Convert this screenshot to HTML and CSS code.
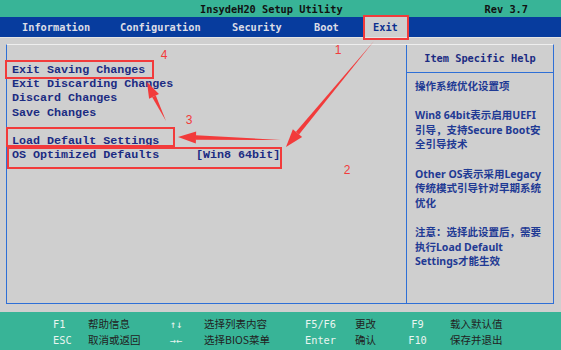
FILE: index.html
```html
<!DOCTYPE html>
<html lang="zh">
<head>
    <meta charset="UTF-8">
    <meta name="viewport" content="width=device-width, initial-scale=1.0">
    <title>InsydeH20 Setup Utility</title>
    <link rel="stylesheet" href="styles.css">
</head>
<body>
    <div class="screen">
        <div class="title-bar">
            <span class="title">InsydeH20 Setup Utility</span>
            <span class="rev">Rev 3.7</span>
        </div>

        <div class="menu-bar">
            <span class="menu-item">Information</span>
            <span class="menu-item">Configuration</span>
            <span class="menu-item">Security</span>
            <span class="menu-item">Boot</span>
            <span class="menu-item active">Exit</span>
        </div>

        <div class="body">
            <div class="frame">
                <!-- Exit options -->
                <div class="options">
                    <div class="option">Exit Saving Changes</div>
                    <div class="option">Exit Discarding Changes</div>
                    <div class="option">Discard Changes</div>
                    <div class="option">Save Changes</div>
                    <div class="option gap">Load Default Settings</div>
                    <div class="option"><span class="label">OS Optimized Defaults</span><span class="value">[Win8 64bit]</span></div>
                </div>

                <!-- Help panel -->
                <div class="help">
                    <div class="help-title">Item Specific Help</div>
                    <div class="help-text">
                        <p>操作系统优化设置项</p>
                        <p>Win8 64bit表示启用UEFI<br>引导，支持Secure Boot安<br>全引导技术</p>
                        <p>Other OS表示采用Legacy<br>传统模式引导针对早期系统<br>优化</p>
                        <p>注意：选择此设置后，需要<br>执行Load Default<br>Settings才能生效</p>
                    </div>
                </div>
            </div>
        </div>

        <div class="key-bar">
            <span class="key">F1</span>
            <span class="desc">帮助信息</span>
            <span class="sym">↑↓</span>
            <span class="desc">选择列表内容</span>
            <span class="key">F5/F6</span>
            <span class="desc">更改</span>
            <span class="key fkey">F9</span>
            <span class="desc">载入默认值</span>

            <span class="key">ESC</span>
            <span class="desc">取消或返回</span>
            <span class="sym">→←</span>
            <span class="desc">选择BIOS菜单</span>
            <span class="key">Enter</span>
            <span class="desc">确认</span>
            <span class="key fkey">F10</span>
            <span class="desc">保存并退出</span>
        </div>

        <!-- red annotations drawn over the screenshot -->
        <svg class="marks" width="561" height="350" viewBox="0 0 561 350">
            <g fill="none" stroke="#f23b3b" stroke-width="2">
                <rect x="364" y="16" width="44" height="23"/>
                <rect x="6" y="61" width="147" height="17"/>
                <rect x="7" y="128" width="167" height="18"/>
                <rect x="8" y="148" width="273" height="20"/>
            </g>
            <g fill="#f23b3b">
                <polygon points="374,41 295.96,131.87 299.04,134.43"/>
                <polygon points="286,147 292.88,129.32 302.12,136.98"/>
                <polygon points="281,140 196.05,135.32 195.93,139.72"/>
                <polygon points="178,137 196.16,131.52 195.82,143.52"/>
                <polygon points="166,121 155.81,95.5 152.21,97.26"/>
                <polygon points="147,82 158.95,93.97 149.07,98.79"/>
            </g>
            <g class="mark-num">
                <text x="338" y="54">1</text>
                <text x="347" y="174">2</text>
                <text x="189" y="124">3</text>
                <text x="164" y="59">4</text>
            </g>
        </svg>
    </div>
</body>
</html>
```

FILE: styles.css
```css
body {
    margin: 0;
    background: #cfcfcf;
}
.screen {
    position: relative;
    width: 561px;
    height: 350px;
    overflow: hidden;
    display: flex;
    flex-direction: column;
    font-family: "DejaVu Sans Mono", monospace;
}
.title-bar {
    height: 17px;
    background: #38b497;
    display: flex;
    align-items: center;
    font-size: 10.3px;
    font-weight: bold;
    color: #111;
}
.title {
    margin-left: 200px;
}
.rev {
    margin-left: auto;
    margin-right: 33px;
}
.menu-bar {
    height: 20px;
    background: #073c9e;
    border-bottom: 1px solid #e4e4e4;
    display: grid;
    grid-template-columns: 98px 112px 82px 59px 45px;
    padding-left: 12px;
}
.menu-item {
    padding-left: 10px;
    line-height: 20px;
    font-size: 10.3px;
    font-weight: bold;
    color: #dcdce6;
}
.menu-item.active {
    background: #cfcfcf;
    color: #0b2f8f;
}
.body {
    flex: 1;
    padding: 6px 7px 8px 6px;
    min-height: 0;
}
.frame {
    height: 100%;
    box-sizing: border-box;
    display: flex;
    border: 1px solid #2e6fd6;
    border-top-color: #eeeeee;
}
.options {
    width: 399px;
    box-sizing: border-box;
    flex-shrink: 0;
    padding: 18px 0 0 5px;
    font-family: "Liberation Mono", monospace;
    font-size: 11.7px;
    font-weight: bold;
    line-height: 14.2px;
    color: #1b2b82;
    white-space: nowrap;
}
.option.gap {
    margin-top: 14.2px;
}
.label {
    display: inline-block;
    width: 184px;
}
.help {
    flex: 1;
    border-left: 1px solid #2e6fd6;
}
.help-title {
    height: 27px;
    line-height: 27px;
    border-bottom: 1px solid #2e6fd6;
    text-align: center;
    font-size: 10.3px;
    font-weight: bold;
    color: #1b2b82;
}
.help-text {
    padding: 6px 4px 0 8px;
    font-family: "Noto Sans", "Noto Sans CJK SC", sans-serif;
    font-size: 10.5px;
    font-weight: bold;
    line-height: 14.6px;
    color: #1f3a94;
    white-space: nowrap;
}
.help-text p {
    margin: 0 0 14.6px;
}
.key-bar {
    height: 38px;
    box-sizing: border-box;
    background: #38b497;
    padding: 4px 0 0 53px;
    display: grid;
    grid-template-columns: 35px 76px 40px 101px 50px 53px 42px 1fr;
    grid-auto-rows: 16px;
    line-height: 16px;
    white-space: nowrap;
}
.key {
    font-size: 10.3px;
    color: #eaf5f1;
}
.fkey {
    width: 19px;
    text-align: center;
}
.sym {
    width: 24px;
    text-align: center;
    font-size: 10.3px;
    color: #eaf5f1;
}
.desc {
    font-family: "Noto Sans CJK SC", sans-serif;
    font-size: 10.5px;
    line-height: 16px;
    color: #222;
}
.marks {
    position: absolute;
    left: 0;
    top: 0;
    pointer-events: none;
}
.mark-num {
    font-family: "Liberation Sans", sans-serif;
    font-size: 12px;
    fill: #f23b3b;
    text-anchor: middle;
}
```
